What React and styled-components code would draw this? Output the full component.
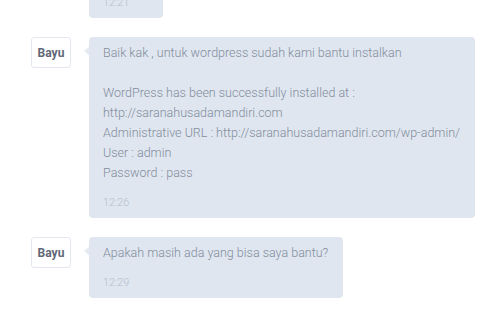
import React from "react";
import styled, { createGlobalStyle } from "styled-components";

const Global = createGlobalStyle`
  html, body { margin: 0; padding: 0; background: #ffffff; }
  body { font-family: Roboto, "Noto Sans", "Liberation Sans", sans-serif; }
`;

const Viewport = styled.div`
  width: 500px;
  height: 334px;
  overflow: hidden;
`;

const List = styled.div`
  display: flex;
  flex-direction: column;
  gap: 19px;
  padding-left: 31px;
  margin-top: -43px;
`;

const Row = styled.div`
  display: flex;
  align-items: flex-start;
  gap: 18px;
`;

const Avatar = styled.div`
  box-sizing: border-box;
  width: 40px;
  height: 31px;
  flex: none;
  display: flex;
  align-items: center;
  justify-content: center;
  border: 1px solid #e3e8ef;
  border-radius: 3px;
  background: #fff;
  font-weight: 700;
  font-size: 12px;
  color: #5f6878;
`;

const Bubble = styled.div`
  position: relative;
  background: #dfe6ef;
  border-radius: 4px;
  padding: 6px 15px 7px 14px;
  max-width: 360px;
  &::before {
    content: "";
    position: absolute;
    left: -5px;
    top: 10px;
    border-style: solid;
    border-width: 4px 5px 4px 0;
    border-color: transparent #e4eaf2 transparent transparent;
  }
`;

const Text = styled.div`
  font-size: 12.5px;
  font-weight: 300;
  line-height: 20px;
  color: #838d9d;
  white-space: pre-line;
`;

const Time = styled.div`
  margin-top: 12px;
  font-size: 10.8px;
  font-weight: 300;
  line-height: 16px;
  color: #b4bfcc;
`;

const messages = [
  { text: "Baik kak", time: "12:21" },
  {
    text:
      "Baik kak , untuk wordpress sudah kami bantu instalkan\n\nWordPress has been successfully installed at :\nhttp://saranahusadamandiri.com\nAdministrative URL : http://saranahusadamandiri.com/wp-admin/\nUser : admin\nPassword : pass",
    time: "12:26",
  },
  { text: "Apakah masih ada yang bisa saya bantu?", time: "12:29" },
];

export default function App() {
  return (
    <Viewport>
      <Global />
      <List>
        {messages.map((m, i) => (
          <Row key={i}>
            <Avatar>Bayu</Avatar>
            <Bubble>
              <Text>{m.text}</Text>
              <Time>{m.time}</Time>
            </Bubble>
          </Row>
        ))}
      </List>
    </Viewport>
  );
}
